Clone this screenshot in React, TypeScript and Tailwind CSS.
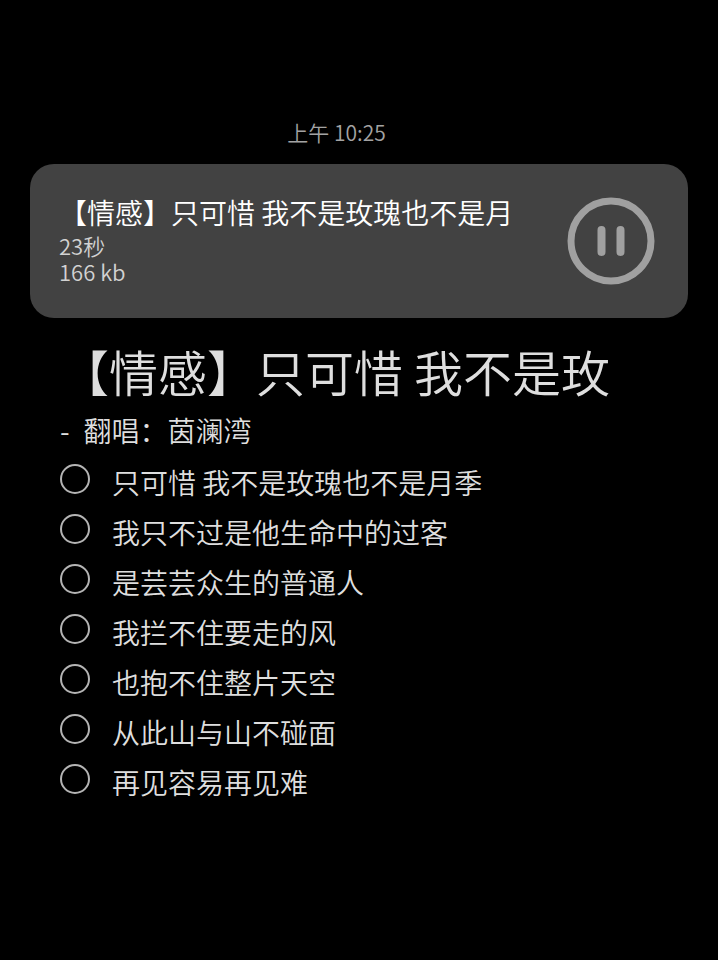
import { useState } from "react";

type Lyric = {
  id: number;
  text: string;
};

const lyrics: Lyric[] = [
  { id: 1, text: "只可惜 我不是玫瑰也不是月季" },
  { id: 2, text: "我只不过是他生命中的过客" },
  { id: 3, text: "是芸芸众生的普通人" },
  { id: 4, text: "我拦不住要走的风" },
  { id: 5, text: "也抱不住整片天空" },
  { id: 6, text: "从此山与山不碰面" },
  { id: 7, text: "再见容易再见难" },
];

function PauseIcon() {
  return (
    <svg viewBox="0 0 88 88" className="size-[88px]" fill="none" stroke="currentColor" aria-hidden="true">
      <circle cx="44" cy="44" r="40" strokeWidth="7" />
      <path d="M34.5 33v22M53.5 33v22" strokeWidth="8" strokeLinecap="round" />
    </svg>
  );
}

function PlayIcon() {
  return (
    <svg viewBox="0 0 88 88" className="size-[88px]" fill="none" stroke="currentColor" aria-hidden="true">
      <circle cx="44" cy="44" r="40" strokeWidth="7" />
      <path d="M37 31l20 13-20 13z" fill="currentColor" strokeWidth="3" strokeLinejoin="round" />
    </svg>
  );
}

function RecordingCard() {
  const [playing, setPlaying] = useState(true);

  return (
    <section className="flex items-center justify-between rounded-3xl bg-[#424242] pt-7 pr-[33px] pb-7 pl-[29px]">
      <div className="flex min-w-0 flex-col pb-[6px]">
        <h2 className="text-[28px] leading-10 whitespace-nowrap text-white">
          【情感】只可惜 我不是玫瑰也不是月
        </h2>
        <p className="text-[22px] leading-[26px] text-[#d2d2d2]">23秒</p>
        <p className="text-[22px] leading-[26px] text-[#d2d2d2]">166 kb</p>
      </div>
      <button
        type="button"
        aria-label={playing ? "暂停" : "播放"}
        onClick={() => setPlaying(!playing)}
        className="shrink-0 text-[#a0a0a0]"
      >
        {playing ? <PauseIcon /> : <PlayIcon />}
      </button>
    </section>
  );
}

function LyricItem({ lyric }: { lyric: Lyric }) {
  const inputId = `lyric-${lyric.id}`;

  return (
    <li className="flex h-[50px] items-start gap-[22px]">
      <input
        id={inputId}
        type="checkbox"
        className="size-[30px] shrink-0 appearance-none rounded-full border-2 border-[#b4b4b4] checked:bg-[#b4b4b4]"
      />
      <label htmlFor={inputId} className="text-[28px] leading-9">
        {lyric.text}
      </label>
    </li>
  );
}

export default function App() {
  return (
    <main
      lang="zh-CN"
      className="min-h-screen bg-black px-[30px] pt-[118px] pb-8 font-['Noto_Sans_CJK_SC',sans-serif] font-[350] text-[#dedede]"
    >
      <p className="pr-[45px] text-center text-[21px] leading-7 text-[#a3a3a3]">
        <time dateTime="10:25">上午 10:25</time>
      </p>

      <div className="pt-[18px]">
        <RecordingCard />
      </div>

      <article className="px-[30px] pt-5">
        <h1 className="pb-1 text-[49px] leading-[66px] whitespace-nowrap">【情感】只可惜 我不是玫</h1>
        <p className="flex gap-[14px] text-[28px] leading-[44px]">
          <span>-</span>
          <span>翻唱：茵澜湾</span>
        </p>
        <ul className="pt-3">
          {lyrics.map((lyric) => (
            <LyricItem key={lyric.id} lyric={lyric} />
          ))}
        </ul>
      </article>
    </main>
  );
}
